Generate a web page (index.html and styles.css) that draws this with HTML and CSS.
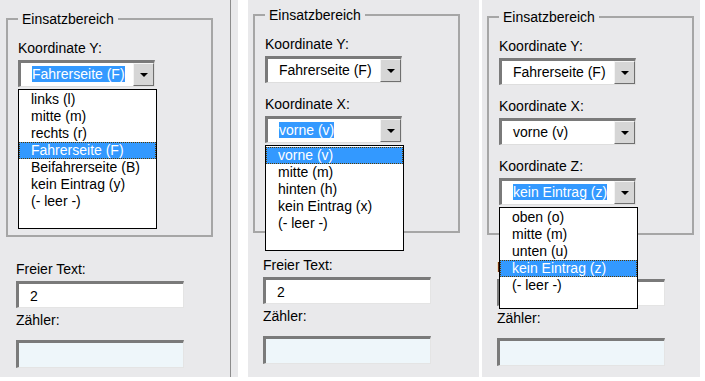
FILE: index.html
```html
<!DOCTYPE html>
<html lang="de">

<head>
    <meta charset="UTF-8">
    <meta name="viewport" content="width=device-width, initial-scale=1.0">
    <title>Einsatzbereich</title>
    <link rel="stylesheet" href="styles.css">
</head>

<body>
    <div class="page">

        <!-- Koordinate Y offen -->
        <div class="panel panel-y">
            <fieldset class="area">
                <legend>Einsatzbereich</legend>
                <div class="field">
                    <label>Koordinate Y:</label>
                    <div class="combo">
                        <span class="combo-value"><span class="sel">Fahrerseite (F)</span></span>
                        <span class="combo-btn"><span class="arrow"></span></span>
                        <ul class="combo-list list-y">
                            <li>links (l)</li>
                            <li>mitte (m)</li>
                            <li>rechts (r)</li>
                            <li class="active">Fahrerseite (F)</li>
                            <li>Beifahrerseite (B)</li>
                            <li>kein Eintrag (y)</li>
                            <li>(- leer -)</li>
                        </ul>
                    </div>
                </div>
            </fieldset>
            <div class="extra">
                <label>Freier Text:</label>
                <input type="text" class="textbox" value="2">
                <label class="counter-label">Zähler:</label>
                <input type="text" class="textbox textbox-off" value="">
            </div>
        </div>

        <!-- Koordinate X offen -->
        <div class="panel panel-x">
            <fieldset class="area">
                <legend>Einsatzbereich</legend>
                <div class="field">
                    <label>Koordinate Y:</label>
                    <div class="combo">
                        <span class="combo-value">Fahrerseite (F)</span>
                        <span class="combo-btn"><span class="arrow"></span></span>
                    </div>
                </div>
                <div class="field">
                    <label>Koordinate X:</label>
                    <div class="combo">
                        <span class="combo-value"><span class="sel">vorne (v)</span></span>
                        <span class="combo-btn"><span class="arrow"></span></span>
                        <ul class="combo-list list-x">
                            <li class="active">vorne (v)</li>
                            <li>mitte (m)</li>
                            <li>hinten (h)</li>
                            <li>kein Eintrag (x)</li>
                            <li>(- leer -)</li>
                        </ul>
                    </div>
                </div>
            </fieldset>
            <div class="extra">
                <label>Freier Text:</label>
                <input type="text" class="textbox" value="2">
                <label class="counter-label">Zähler:</label>
                <input type="text" class="textbox textbox-off" value="">
            </div>
        </div>

        <!-- Koordinate Z offen -->
        <div class="panel panel-z">
            <fieldset class="area">
                <legend>Einsatzbereich</legend>
                <div class="field">
                    <label>Koordinate Y:</label>
                    <div class="combo">
                        <span class="combo-value">Fahrerseite (F)</span>
                        <span class="combo-btn"><span class="arrow"></span></span>
                    </div>
                </div>
                <div class="field">
                    <label>Koordinate X:</label>
                    <div class="combo">
                        <span class="combo-value">vorne (v)</span>
                        <span class="combo-btn"><span class="arrow"></span></span>
                    </div>
                </div>
                <div class="field">
                    <label>Koordinate Z:</label>
                    <div class="combo">
                        <span class="combo-value"><span class="sel">kein Eintrag (z)</span></span>
                        <span class="combo-btn"><span class="arrow"></span></span>
                        <ul class="combo-list list-z">
                            <li>oben (o)</li>
                            <li>mitte (m)</li>
                            <li>unten (u)</li>
                            <li class="active">kein Eintrag (z)</li>
                            <li>(- leer -)</li>
                        </ul>
                    </div>
                </div>
            </fieldset>
            <div class="extra">
                <label>Freier Text:</label>
                <input type="text" class="textbox" value="">
                <label class="counter-label">Zähler:</label>
                <input type="text" class="textbox textbox-off" value="">
            </div>
        </div>

    </div>
</body>

</html>
```

FILE: styles.css
```css
body {
    margin: 0;
    padding: 0;
    font-family: "Liberation Sans", Arial, sans-serif;
    font-size: 14px;
    color: #000;
    background-color: #fff;
}

.page {
    display: flex;
    width: 705px;
    height: 381px;
    background-color: #fff;
}

.panel {
    height: 377px;
    box-sizing: border-box;
    background-color: #e9e9eb;
}

.panel-y {
    width: 238px;
    padding: 10px 0 0 6px;
    background: linear-gradient(to right, transparent 230px, #8c8c8c 230px, #8c8c8c 231px, transparent 231px), #e9e9eb;
}

.panel-x {
    width: 231px;
    margin-left: 10px;
    padding: 6px 0 0 5px;
}

.panel-z {
    width: 218px;
    margin-left: 3px;
    padding: 8px 0 0 5px;
}

/* Rahmen Einsatzbereich */
.area {
    margin: 0;
    width: 207px;
    height: 227px;
    box-sizing: border-box;
    border: 2px solid #a6a6a6;
    padding: 12px 10px 0 10px;
    min-width: 0;
}

.area legend {
    padding: 0 4px;
    line-height: 18px;
}

.field label {
    display: block;
    line-height: 16px;
    margin-bottom: 4px;
}

.field + .field {
    margin-top: 13px;
}

/* Auswahlfeld */
.combo {
    position: relative;
    display: flex;
    width: 137px;
    height: 27px;
    box-sizing: border-box;
    border-style: solid;
    border-width: 3px 1px 1px 3px;
    border-color: #7a7a7a #dedede #dedede #7a7a7a;
    background-color: #fff;
}

.combo-value {
    flex: 1;
    padding-left: 11px;
    line-height: 22px;
    white-space: nowrap;
}

.sel {
    background-color: #3399ff;
    color: #fff;
}

.combo-btn {
    width: 21px;
    box-sizing: border-box;
    display: flex;
    align-items: center;
    justify-content: center;
    background-color: #d6d6d6;
    border: 1px solid;
    border-color: #f4f4f4 #6f6f6f #6f6f6f #f4f4f4;
}

.arrow {
    width: 0;
    height: 0;
    border-left: 4px solid transparent;
    border-right: 4px solid transparent;
    border-top: 4px solid #000;
}

.combo-list {
    position: absolute;
    left: -3px;
    top: calc(100% + 3px);
    z-index: 2;
    width: 139px;
    box-sizing: border-box;
    margin: 0;
    padding: 1px 0 0 0;
    list-style: none;
    border: 1px solid #000;
    background-color: #fff;
}

.combo-list li {
    line-height: 17px;
    padding-left: 12px;
    white-space: nowrap;
}

.combo-list li.active {
    background-color: #3399ff;
    color: #fff;
    outline: 1px dotted #5a3a00;
    outline-offset: -1px;
}

.list-y {
    height: 140px;
}

.list-x {
    height: 106px;
}

.list-z {
    height: 102px;
}

/* Freier Text / Zaehler */
.extra {
    margin-top: 24px;
    padding-left: 10px;
}

.extra label {
    display: block;
    line-height: 16px;
}

.textbox {
    display: block;
    width: 168px;
    height: 27px;
    box-sizing: border-box;
    margin: 4px 0 0 0;
    padding: 0 0 0 11px;
    border-style: solid;
    border-width: 3px 1px 1px 3px;
    border-color: #7a7a7a #e4e4e4 #e4e4e4 #7a7a7a;
    background-color: #fff;
    font-family: inherit;
    font-size: 14px;
    color: #000;
    outline: none;
}

.counter-label {
    margin-top: 4px;
}

.textbox-off {
    height: 28px;
    margin-top: 12px;
    background-color: #eef6fa;
}
```
